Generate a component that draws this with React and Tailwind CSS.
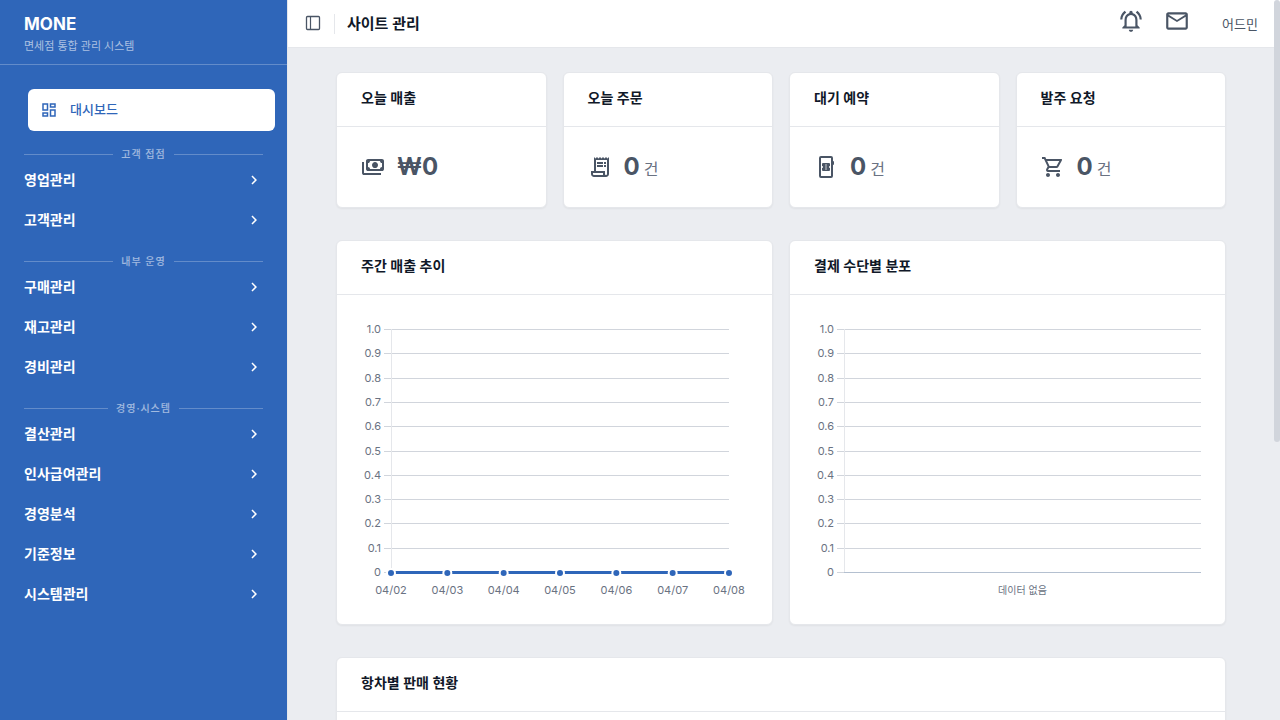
import React from 'react';
import {
  MdChevronRight,
  MdMailOutline,
  MdOutlineDashboard,
  MdOutlineNotificationsActive,
  MdOutlineReceiptLong,
  MdOutlineShoppingCart
} from 'react-icons/md';

const NAV_GROUPS = [
  { title: '고객 접점', items: ['영업관리', '고객관리'] },
  { title: '내부 운영', items: ['구매관리', '재고관리', '경비관리'] },
  { title: '경영·시스템', items: ['결산관리', '인사급여관리', '경영분석', '기준정보', '시스템관리'] }
];

const DATES = ['04/02', '04/03', '04/04', '04/05', '04/06', '04/07', '04/08'];
const TICKS = ['1.0', '0.9', '0.8', '0.7', '0.6', '0.5', '0.4', '0.3', '0.2', '0.1', '0'];

function PaymentsIcon({ className }) {
  return (
    <svg viewBox="0 -960 960 960" fill="currentColor" className={className} aria-hidden="true">
      <path d="M560-440q-50 0-85-35t-35-85q0-50 35-85t85-35q50 0 85 35t35 85q0 50-35 85t-85 35ZM280-320q-33 0-56.5-23.5T200-400v-320q0-33 23.5-56.5T280-800h560q33 0 56.5 23.5T920-720v320q0 33-23.5 56.5T840-320H280Zm80-80h400q0-33 23.5-56.5T840-480v-160q-33 0-56.5-23.5T760-720H360q0 33-23.5 56.5T280-640v160q33 0 56.5 23.5T360-400Zm440 240H120q-33 0-56.5-23.5T40-240v-440h80v440h680v80Z" />
    </svg>
  );
}

// Phone with a side button and a ticket on its screen
function ReservationIcon({ className }) {
  return (
    <svg viewBox="0 0 24 24" fill="currentColor" className={className} aria-hidden="true">
      <path
        fillRule="evenodd"
        d="M7 1h10a2 2 0 0 1 2 2v3a1 1 0 0 1 1 1v2a1 1 0 0 1-1 1v11a2 2 0 0 1-2 2H7a2 2 0 0 1-2-2V3a2 2 0 0 1 2-2Zm0 2v18h10V3H7Z"
      />
      <path d="M9 8h6a1 1 0 0 1 1 1v2a1 1 0 0 0 0 2v2a1 1 0 0 1-1 1H9a1 1 0 0 1-1-1v-2a1 1 0 0 0 0-2V9a1 1 0 0 1 1-1Z" />
      <path d="M12 9v6" fill="none" stroke="white" strokeOpacity="0.35" strokeWidth="2" />
    </svg>
  );
}

function PanelIcon({ className }) {
  return (
    <svg viewBox="0 0 18 18" fill="none" stroke="currentColor" className={className} aria-hidden="true">
      <rect x="2.5" y="1.5" width="13" height="13" rx="1" strokeWidth="1.3" />
      <path d="M6.5 1.5v13" strokeWidth="1.2" />
    </svg>
  );
}

const STATS = [
  { title: '오늘 매출', value: '₩0', Icon: PaymentsIcon },
  { title: '오늘 주문', value: '0', unit: '건', Icon: MdOutlineReceiptLong },
  { title: '대기 예약', value: '0', unit: '건', Icon: ReservationIcon },
  { title: '발주 요청', value: '0', unit: '건', Icon: MdOutlineShoppingCart }
];

function Card({ title, children }) {
  return (
    <section className="min-w-0 rounded-md border border-gray-200 bg-white shadow-xs">
      <h2 className="border-b border-gray-200 px-6 pt-3.5 pb-[18px] text-sm leading-[21px] font-semibold text-gray-900">
        {title}
      </h2>
      {children}
    </section>
  );
}

function Sidebar() {
  return (
    <aside className="flex w-[287px] shrink-0 flex-col bg-[#2f66b9] text-white">
      <div className="h-[65px] border-b border-white/25 px-6 pt-3">
        <p className="text-[17px] leading-6 font-bold">MONE</p>
        <p className="text-[11px] leading-5 text-white/60">면세점 통합 관리 시스템</p>
      </div>
      <nav className="px-6 pt-6">
        <a
          href="#dashboard"
          className="-mr-3 ml-1 flex h-[42px] items-center gap-3 rounded-md bg-white px-3 text-[13px] font-medium text-[#2f66b9]"
        >
          <MdOutlineDashboard className="size-[18px]" />
          대시보드
        </a>
        <div className="mt-[17px] space-y-[15px]">
          {NAV_GROUPS.map((group) => (
            <div key={group.title}>
              <div className="flex h-3 items-center gap-2 text-[10px] leading-3 font-medium tracking-widest text-white/55">
                <span className="h-px flex-1 bg-white/25" />
                {group.title}
                <span className="h-px flex-1 bg-white/25" />
              </div>
              {group.items.map((item) => (
                <button
                  key={item}
                  type="button"
                  className="flex h-10 w-full items-center justify-between text-left text-sm font-semibold"
                >
                  {item}
                  <MdChevronRight className="size-[18px]" />
                </button>
              ))}
            </div>
          ))}
        </div>
      </nav>
    </aside>
  );
}

function Header() {
  return (
    <header className="flex h-12 items-center border-b border-gray-200 bg-white pr-[22px] pl-4">
      <button type="button" aria-label="메뉴 접기" className="text-gray-600">
        <PanelIcon className="size-[18px]" />
      </button>
      <span className="mr-3 ml-3 h-5 w-px bg-gray-200" />
      <h1 className="text-[15px] leading-5 font-semibold text-gray-900">사이트 관리</h1>
      <div className="ml-auto flex items-center text-gray-600">
        <button type="button" aria-label="알림" className="mr-5 mb-1.5">
          <MdOutlineNotificationsActive className="size-[26px]" />
        </button>
        <button type="button" aria-label="메일" className="mr-8 mb-1.5">
          <MdMailOutline className="size-[26px]" />
        </button>
        <span className="text-[13px] leading-5">어드민</span>
      </div>
    </header>
  );
}

// Points are placed at even steps over the plot width, all of them on the zero line
function Chart({ labels, series }) {
  const position = (i) => (labels.length > 1 ? (i / (labels.length - 1)) * 100 : 50);

  return (
    <div className={series ? 'pt-[25px] pr-[43px] pb-6 pl-6' : 'px-6 pt-[25px] pb-6'}>
      <svg className="block h-[280px] w-full overflow-visible" role="img" aria-label="차트">
        <svg x="30" width="100%" height="280" overflow="visible" className="[width:calc(100%-30px)]">
          {TICKS.map((tick, i) => {
            const y = Math.round(9 + i * 24.3) + 0.5;
            return (
              <g key={tick}>
                <line x1="-7" x2={tick === '0' ? '0' : '100%'} y1={y} y2={y} className="stroke-gray-300" />
                <text x="-10" y={y + 3.5} textAnchor="end" className="fill-gray-500 text-[11px]">
                  {tick}
                </text>
              </g>
            );
          })}
          <line x1="0.5" x2="0.5" y1="9" y2="252" className="stroke-gray-200" />
          <line x1="0" x2="100%" y1="252.5" y2="252.5" className="stroke-[#b4c0d0]" />
          {series && <line x1="0" x2="100%" y1="252.5" y2="252.5" strokeWidth="3" className="stroke-[#2f66b9]" />}
          {labels.map((label, i) => (
            <g key={label}>
              {series && (
                <circle
                  cx={`${position(i)}%`}
                  cy="253"
                  r="4"
                  strokeWidth="2"
                  className="fill-[#2f66b9] stroke-white"
                />
              )}
              <text
                x={`${position(i)}%`}
                y="274"
                textAnchor="middle"
                className={series ? 'fill-gray-500 text-[11px]' : 'fill-gray-500 text-[10px]'}
              >
                {label}
              </text>
            </g>
          ))}
        </svg>
      </svg>
    </div>
  );
}

export default function App() {
  return (
    <div className="flex h-screen overflow-hidden bg-[#ebedf1] font-[Inter,'Noto_Sans_CJK_KR',sans-serif]">
      <Sidebar />
      <div className="min-w-0 flex-1 border-l border-gray-200">
        <Header />
        <main className="mr-[6px] space-y-8 px-12 py-6">
          <div className="grid grid-cols-4 gap-4">
            {STATS.map(({ title, value, unit, Icon }) => (
              <Card key={title} title={title}>
                <div className="flex h-20 items-center gap-3 px-6 text-gray-600">
                  <Icon className="size-6" />
                  <p className="text-2xl font-bold">
                    {value}
                    {unit && <span className="ml-1 text-base font-normal text-gray-500">{unit}</span>}
                  </p>
                </div>
              </Card>
            ))}
          </div>
          <div className="grid grid-cols-2 gap-4">
            <Card title="주간 매출 추이">
              <Chart labels={DATES} series />
            </Card>
            <Card title="결제 수단별 분포">
              <Chart labels={['데이터 없음']} />
            </Card>
          </div>
          <Card title="항차별 판매 현황">
            <div className="h-80" />
          </Card>
        </main>
      </div>
      {/* Scroll thumb of the page */}
      <div className="fixed top-0 right-0 h-[442px] w-[6px] rounded-full bg-gray-300" />
    </div>
  );
}
